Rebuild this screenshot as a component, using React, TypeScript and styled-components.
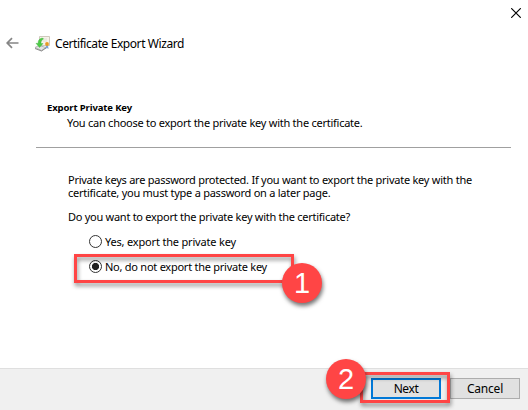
import React from 'react';
import styled, { createGlobalStyle } from 'styled-components';

const GlobalStyle = createGlobalStyle`
  * { box-sizing: border-box; }
  html, body { margin: 0; padding: 0; background: #fff; overflow: hidden; }
`;

const Window = styled.main`
  position: relative;
  display: flex;
  flex-direction: column;
  width: 528px;
  height: 410px;
  background: #fff;
  color: #000;
  font: 11px/13px "Noto Sans", "Open Sans", sans-serif;
`;

const CaptionBar = styled.div`
  display: flex;
  justify-content: flex-end;
  height: 30px;
  padding: 8px 7px 0 0;
`;

const CloseButton = styled.button`
  display: flex;
  width: 10px;
  height: 10px;
  padding: 0;
  border: 0;
  background: none;
`;

const TitleRow = styled.header`
  display: flex;
  align-items: center;
  height: 28px;
  padding-left: 6px;
`;

const BackIcon = styled.svg`
  width: 13px;
  height: 12px;
  margin: -2px 15px 0 0;
`;

const CertificateIcon = styled.svg`
  width: 17px;
  height: 17px;
  margin: -2px 4px 0 0;
`;

const Line = styled.span<{ $spacing?: number }>`
  display: block;
  white-space: pre;
  letter-spacing: ${({ $spacing = -0.25 }) => $spacing}px;
`;

const Title = styled(Line).attrs({ as: 'h1' })`
  margin: 0;
  font-size: 12px;
  font-weight: 400;
  line-height: 16px;
`;

const Intro = styled.section`
  height: 90px;
  margin: 0 17px 0 36px;
  padding: 43px 0 0 11px;
  border-bottom: 1px solid #a0a0a0;
`;

const Heading = styled(Line).attrs({ as: 'h2' })`
  margin: 0;
  font-size: 9.5px;
  font-weight: 700;
  line-height: 13px;
`;

const Subheading = styled(Line)`
  margin: 2px 0 0 20px;
`;

const Content = styled.section`
  flex: 1;
  padding: 25px 0 0 68px;
`;

const Question = styled(Line)`
  margin-top: 11px;
`;

const Choices = styled.div`
  display: flex;
  flex-direction: column;
  gap: 12px;
  margin: 12px 0 0 21px;
`;

const Choice = styled.label`
  display: flex;
  align-items: center;
  gap: 3px;
  height: 13px;
`;

const Radio = styled.span<{ $checked?: boolean }>`
  width: 13px;
  height: 13px;
  border: 1px solid #333;
  border-radius: 50%;
  background: ${({ $checked }) =>
    $checked ? 'radial-gradient(circle, #222 3.2px, #fff 4px)' : '#fff'};
`;

const Footer = styled.footer`
  display: flex;
  justify-content: flex-end;
  gap: 9px;
  height: 42px;
  padding: 9px 8px 0 0;
  border-top: 1px solid #dfdfdf;
  background: #f0f0f0;
`;

const Button = styled.button<{ $primary?: boolean }>`
  display: flex;
  align-items: center;
  justify-content: center;
  width: 70px;
  height: 21px;
  padding: 0;
  border: ${({ $primary }) => ($primary ? '2px solid #0078d7' : '1px solid #adadad')};
  background: #e1e1e1;
  color: #000;
  font: 12px/16px "Noto Sans", "Open Sans", sans-serif;
`;

const Highlight = styled.div<{ $x: number; $y: number; $w: number; $h: number }>`
  position: absolute;
  left: ${({ $x }) => $x}px;
  top: ${({ $y }) => $y}px;
  width: ${({ $w }) => $w}px;
  height: ${({ $h }) => $h}px;
  border: 3px solid #ff4545;
  filter: drop-shadow(1px 3px 2px rgba(0, 0, 0, 0.45));
`;

const Step = styled.div<{ $x: number; $y: number }>`
  position: absolute;
  left: ${({ $x }) => $x}px;
  top: ${({ $y }) => $y}px;
  display: flex;
  align-items: center;
  justify-content: center;
  width: 40px;
  height: 40px;
  border-radius: 50%;
  background: #ff4545;
  box-shadow: 1px 3px 4px rgba(0, 0, 0, 0.55);
  color: #fff;
  font: 29px/40px "Liberation Sans", Arial, sans-serif;
`;

export default function App() {
  return (
    <Window>
      <GlobalStyle />
      <CaptionBar>
        <CloseButton aria-label="Close">
          <svg width="10" height="10" viewBox="0 0 10 10">
            <path d="M.2.2l9.600 9.600M9.800.2L.2 9.800" stroke="#000" strokeWidth="1.15" />
          </svg>
        </CloseButton>
      </CaptionBar>
      <TitleRow>
        <BackIcon viewBox="0 0 13 12">
          <path d="M12.5 6H1.4M6 1.2L1.2 6L6 10.8" fill="none" stroke="#858585" strokeWidth="1.7" />
        </BackIcon>
        <CertificateIcon viewBox="0 0 17 17">
          <path d="M5.500 1.500h10v9h-10z" fill="#f7f3e9" stroke="#cfc9bd" />
          <path d="M8 4h5M9 6h4" stroke="#e2ded6" />
          <path d="M12 10l-.5 4 1.500-1 1.500 1-.5-4z" fill="#7ba3d8" />
          <circle cx="13" cy="9" r="1.900" fill="#e79a24" />
          <path d="M1 12.500L5 10.500l7 2-4.500 3z" fill="#e3e3e3" stroke="#a8a8a8" strokeWidth=".8" />
          <path d="M1 13.500l6.500 2.500 4.500-3" fill="none" stroke="#808080" strokeWidth=".9" />
          <path d="M8.500 3C5 3.500 4 6 4.200 8.500L2 8.300 5.500 12.500 9 8.500 7 8.600C6.800 6.500 7.500 5 9.500 4z" fill="#4dcb46" stroke="#38ad36" strokeWidth=".4" />
        </CertificateIcon>
        <Title $spacing={-0.42}>Certificate Export Wizard</Title>
      </TitleRow>
      <Intro>
        <Heading $spacing={-0.12}>Export Private Key</Heading>
        <Subheading>You can choose to export the private key with the certificate.</Subheading>
      </Intro>
      <Content>
        <Line>
          {'Private keys are password protected. If you want to export the private key with the\ncertificate, you must type a password on a later page.'}
        </Line>
        <Question $spacing={-0.27}>Do you want to export the private key with the certificate?</Question>
        <Choices role="radiogroup">
          <Choice>
            <Radio role="radio" aria-checked={false} />
            <Line $spacing={-0.18}>Yes, export the private key</Line>
          </Choice>
          <Choice>
            <Radio role="radio" aria-checked $checked />
            <Line>No, do not export the private key</Line>
          </Choice>
        </Choices>
      </Content>
      <Footer>
        <Button $primary><Line $spacing={-0.4}>Next</Line></Button>
        <Button><Line $spacing={-0.2}>Cancel</Line></Button>
      </Footer>
      <Highlight $x={74} $y={254} $w={220} $h={29} />
      <Step $x={282} $y={263}>1</Step>
      <Highlight $x={360} $y={372} $w={90} $h={31} />
      <Step $x={326} $y={359}>2</Step>
    </Window>
  );
}
